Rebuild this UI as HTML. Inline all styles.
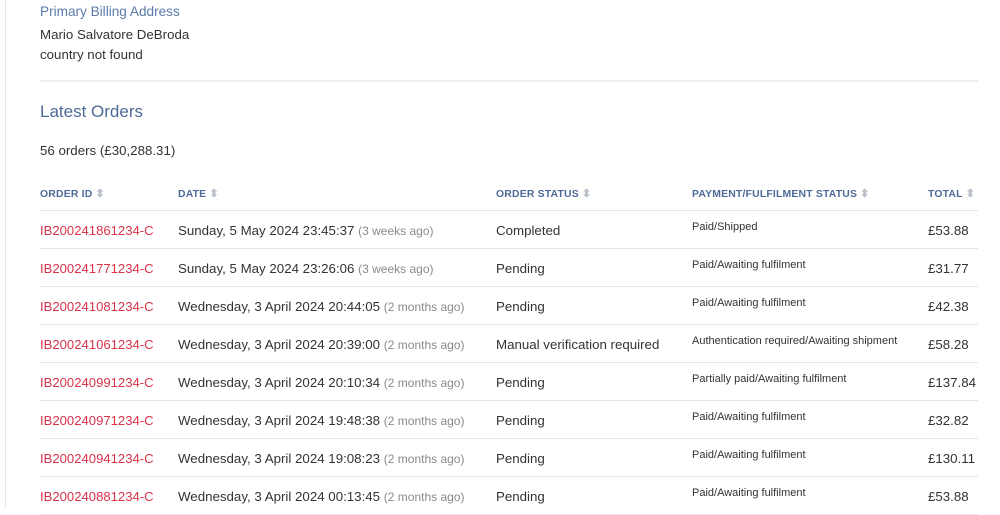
<!DOCTYPE html>
<html><head><meta charset="utf-8"><style>
*{margin:0;padding:0;box-sizing:border-box}
body{width:1000px;height:507px;overflow:hidden;background:#fff;font-family:"Liberation Sans",sans-serif;color:#333;position:relative}
.vl{position:absolute;left:5px;top:0;width:1px;height:507px;background:#e4e4e4}
.a{position:absolute;white-space:nowrap}
.hr{position:absolute;left:40px;width:938px;height:1px;background:#e6e6e6}
.h{font-size:10.4px;font-weight:bold;color:#4d6b96;letter-spacing:.2px}
.h span{color:#b8c0ca;font-size:11px;margin-left:3px}
.id{color:#d9334a;font-size:13.1px}
.t{font-size:13.3px;color:#333}
.g{color:#8a8a8a;font-size:12px}
.p{font-size:11px;color:#333}
</style></head><body>
<div class="vl"></div>
<div class="a" style="left:40px;top:4px;font-size:13.6px;color:#5a7bab">Primary Billing Address</div>
<div class="a t" style="left:40px;top:27px">Mario Salvatore DeBroda</div>
<div class="a t" style="left:40px;top:47px">country not found</div>
<div class="hr" style="top:80px;height:2px;background:#eee"></div>
<div class="a" style="left:40px;top:102px;font-size:17px;color:#4d6b96">Latest Orders</div>
<div class="a t" style="left:40px;top:143px">56 orders (£30,288.31)</div>
<div class="a h" style="left:40px;top:187px">ORDER ID<span>⬍</span></div>
<div class="a h" style="left:178px;top:187px">DATE<span>⬍</span></div>
<div class="a h" style="left:496px;top:187px">ORDER STATUS<span>⬍</span></div>
<div class="a h" style="left:692px;top:187px">PAYMENT/FULFILMENT STATUS<span>⬍</span></div>
<div class="a h" style="left:928px;top:187px">TOTAL<span>⬍</span></div>
<div class="hr" style="top:210px"></div>
<div id="rows"></div>
<script>
var d=[["IB200241861234-C","Sunday, 5 May 2024 23:45:37","3 weeks ago","Completed","Paid/Shipped","£53.88"],
["IB200241771234-C","Sunday, 5 May 2024 23:26:06","3 weeks ago","Pending","Paid/Awaiting fulfilment","£31.77"],
["IB200241081234-C","Wednesday, 3 April 2024 20:44:05","2 months ago","Pending","Paid/Awaiting fulfilment","£42.38"],
["IB200241061234-C","Wednesday, 3 April 2024 20:39:00","2 months ago","Manual verification required","Authentication required/Awaiting shipment","£58.28"],
["IB200240991234-C","Wednesday, 3 April 2024 20:10:34","2 months ago","Pending","Partially paid/Awaiting fulfilment","£137.84"],
["IB200240971234-C","Wednesday, 3 April 2024 19:48:38","2 months ago","Pending","Paid/Awaiting fulfilment","£32.82"],
["IB200240941234-C","Wednesday, 3 April 2024 19:08:23","2 months ago","Pending","Paid/Awaiting fulfilment","£130.11"],
["IB200240881234-C","Wednesday, 3 April 2024 00:13:45","2 months ago","Pending","Paid/Awaiting fulfilment","£53.88"]];
var h="";d.forEach(function(r,i){var y=210+i*38;
h+='<div class="a id" style="left:40px;top:'+(y+13)+'px">'+r[0]+'</div>';
h+='<div class="a t" style="left:178px;top:'+(y+13)+'px">'+r[1]+' <span class="g">('+r[2]+')</span></div>';
h+='<div class="a t" style="left:496px;top:'+(y+13)+'px">'+r[3]+'</div>';
h+='<div class="a p" style="left:692px;top:'+(y+11)+'px">'+r[4]+'</div>';
h+='<div class="a t" style="left:928px;top:'+(y+13)+'px">'+r[5]+'</div>';
h+='<div class="hr" style="top:'+(y+38)+'px"></div>';});
document.getElementById("rows").innerHTML=h;
</script>
</body></html>
